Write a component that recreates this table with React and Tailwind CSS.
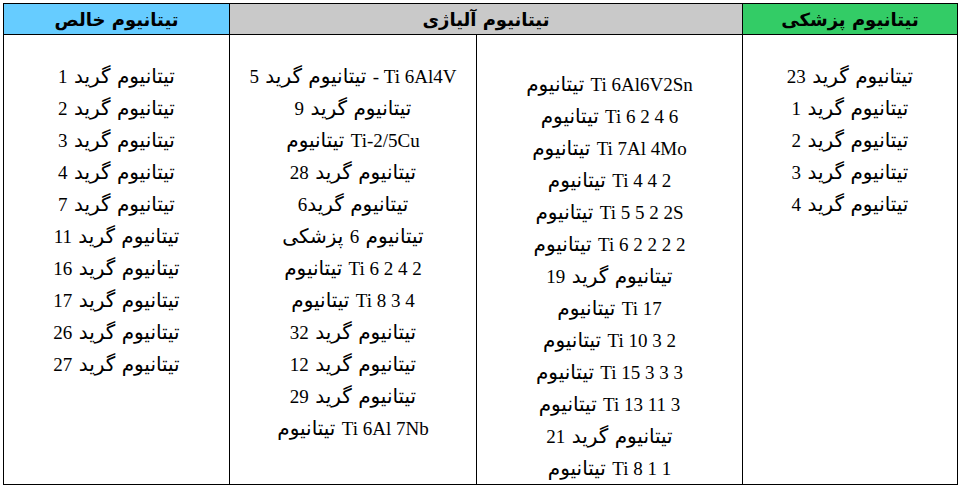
import React from 'react';

const medical = ['تیتانیوم گرید 23', 'تیتانیوم گرید 1', 'تیتانیوم گرید 2', 'تیتانیوم گرید 3', 'تیتانیوم گرید 4'];

const alloyA = [
  'Ti 6Al6V2Sn تیتانیوم',
  'Ti 6 2 4 6 تیتانیوم',
  'Ti 7Al 4Mo تیتانیوم',
  'Ti 4 4 2 تیتانیوم',
  'Ti 5 5 2 2S تیتانیوم',
  'Ti 6 2 2 2 2 تیتانیوم',
  'تیتانیوم گرید 19',
  'Ti 17 تیتانیوم',
  'Ti 10 3 2 تیتانیوم',
  'Ti 15 3 3 3 تیتانیوم',
  'Ti 13 11 3 تیتانیوم',
  'تیتانیوم گرید 21',
  'Ti 8 1 1 تیتانیوم',
];

const alloyB = [
  'Ti 6Al4V - تیتانیوم گرید 5',
  'تیتانیوم گرید 9',
  'Ti-2/5Cu تیتانیوم',
  'تیتانیوم گرید 28',
  'تیتانیوم گرید6',
  'تیتانیوم 6 پزشکی',
  'Ti 6 2 4 2 تیتانیوم',
  'Ti 8 3 4 تیتانیوم',
  'تیتانیوم گرید 32',
  'تیتانیوم گرید 12',
  'تیتانیوم گرید 29',
  'Ti 6Al 7Nb تیتانیوم',
];

const pure = [
  'تیتانیوم گرید 1',
  'تیتانیوم گرید 2',
  'تیتانیوم گرید 3',
  'تیتانیوم گرید 4',
  'تیتانیوم گرید 7',
  'تیتانیوم گرید 11',
  'تیتانیوم گرید 16',
  'تیتانیوم گرید 17',
  'تیتانیوم گرید 26',
  'تیتانیوم گرید 27',
];

// latin runs get the serif face, persian stays in the sans fallback
function Line({ text }) {
  const parts = text.split(/([A-Za-z0-9\-\/]+(?: [A-Za-z0-9\-\/]+)*)/);
  return (
    <div className="h-[32px] leading-[32px] whitespace-nowrap">
      {parts.map((p, i) =>
        /[A-Za-z0-9]/.test(p) ? (
          <span key={i} className="text-[19px] font-['Liberation_Serif',serif]">
            {p}
          </span>
        ) : (
          <span key={i}>{p}</span>
        )
      )}
    </div>
  );
}

function Cell({ items, top }) {
  return (
    <td className={`border border-black align-top text-center ${top}`}>
      {items.map((t) => (
        <Line key={t} text={t} />
      ))}
    </td>
  );
}

export default function App() {
  return (
    <div className="w-[960px] h-[487px] bg-white pt-[3px] pl-[3px]">
      <table
        dir="rtl"
        className="w-[954px] table-fixed border-collapse text-black text-[20px] font-['DejaVu_Sans',sans-serif]"
      >
        <colgroup>
          <col className="w-[215px]" />
          <col className="w-[266px]" />
          <col className="w-[247px]" />
          <col className="w-[226px]" />
        </colgroup>
        <thead>
          <tr className="h-[31px] text-[18px] font-bold">
            <th className="border border-black bg-[#33cc66]">تیتانیوم پزشکی</th>
            <th colSpan={2} className="border border-black bg-[#c9c9c9]">تیتانیوم آلیاژی</th>
            <th className="border border-black bg-[#66ccff]">تیتانیوم خالص</th>
          </tr>
        </thead>
        <tbody>
          <tr className="h-[449px]">
            <Cell items={medical} top="pt-[25px]" />
            <Cell items={alloyA} top="pt-[33px]" />
            <Cell items={alloyB} top="pt-[25px]" />
            <Cell items={pure} top="pt-[25px]" />
          </tr>
        </tbody>
      </table>
    </div>
  );
}
